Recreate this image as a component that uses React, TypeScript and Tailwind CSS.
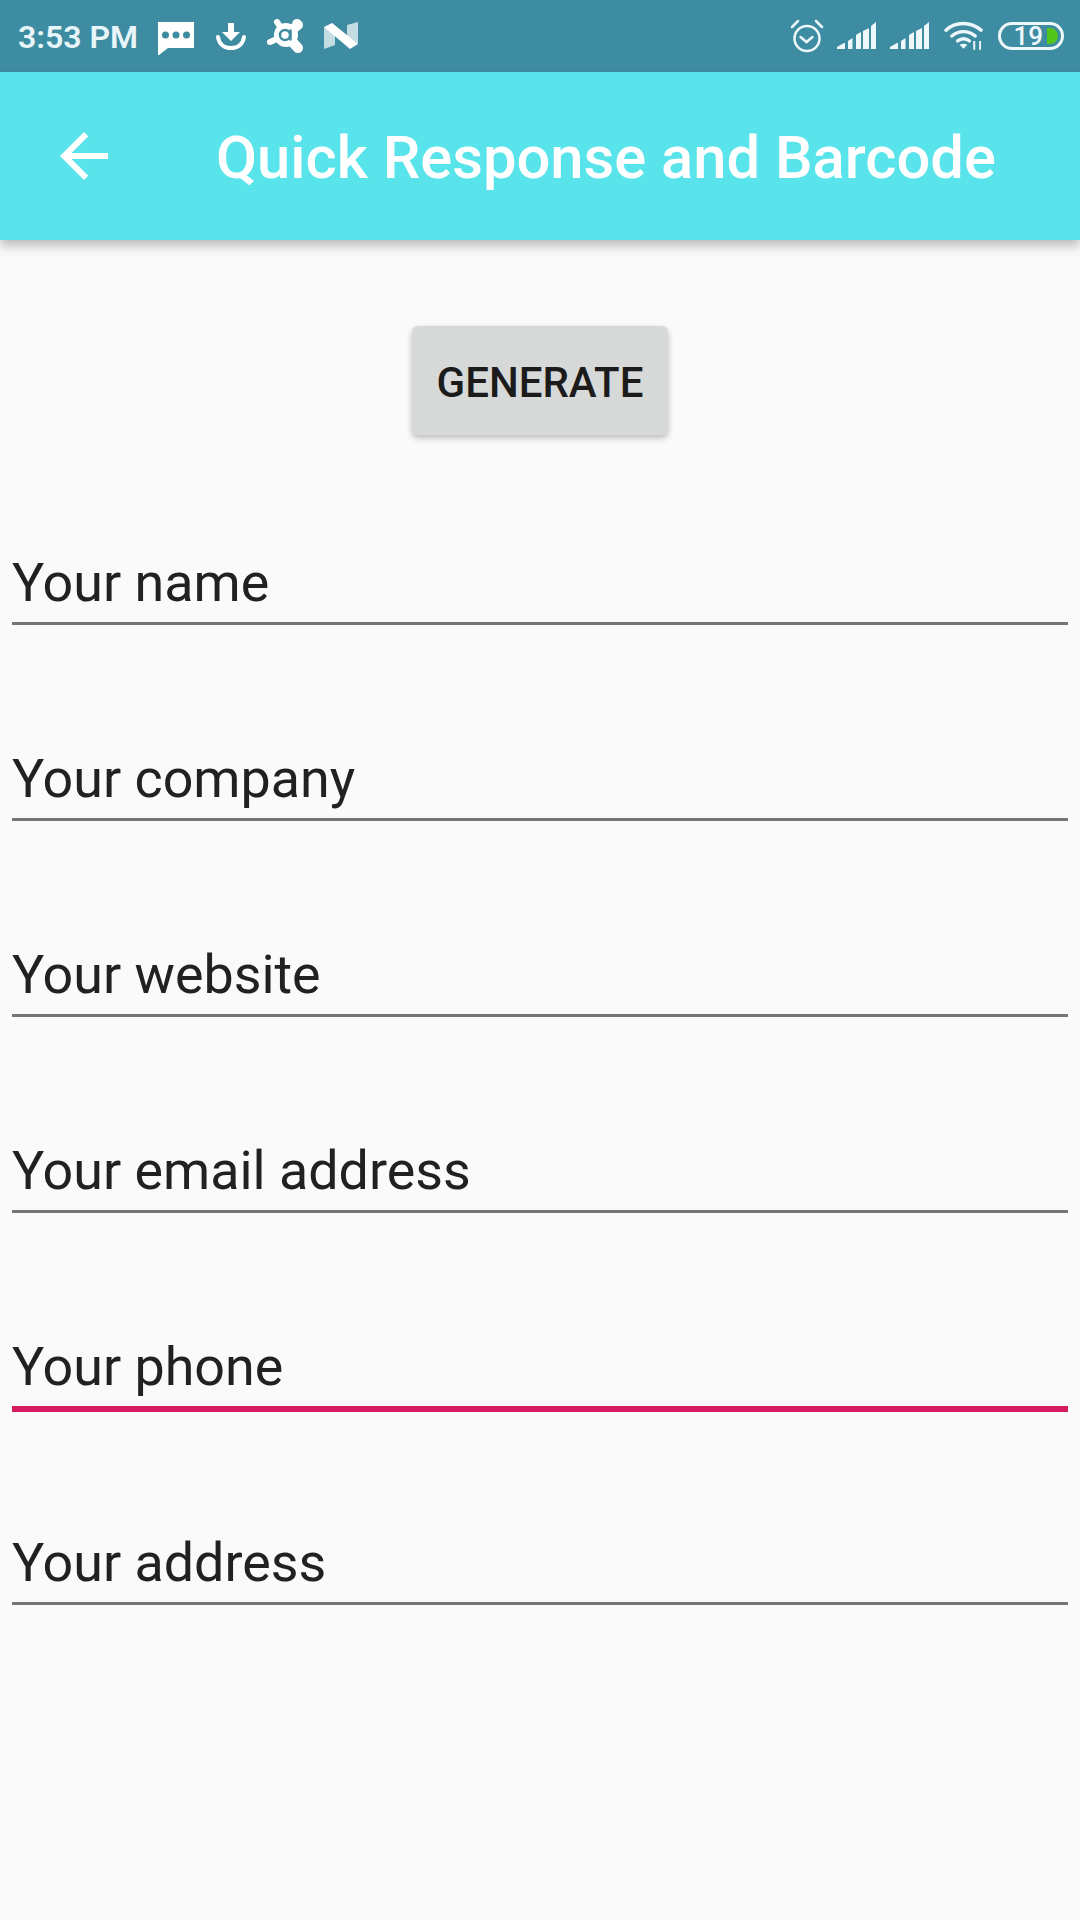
const fields = ['Your name', 'Your company', 'Your website', 'Your email address', 'Your phone', 'Your address'];

const Signal = () => (
  <svg width="40" height="28" viewBox="0 0 40 28" fill="#eef8fa">
    <path d="M0 27v-2l7-4h1v6z" />
    <path d="M11 27v-8l4.500-3v11z" />
    <path d="M19 27v-14l5-3v17z" />
    <path d="M26 27v-18l6-3v21z" />
    <path d="M34 27v-23l5-4v27z" />
  </svg>
);

const StatusBar = () => (
  <div className="flex h-[72px] items-center justify-between bg-[#3e8ca1] pl-[18px] pr-[16px]">
    <div className="flex items-center">
      <span className="pt-[2px] text-[32px] font-semibold leading-none text-[#e9f6f9]">3:53 PM</span>
      {/* message */}
      <svg className="ml-[20px] mt-[5px]" width="36" height="33" viewBox="0 0 36 33" fill="#fff">
        <path d="M0 0h36v26H10l-9 7H0z" />
        <circle cx="7.500" cy="13" r="3.500" fill="#3e8ca1" />
        <circle cx="18" cy="13" r="3.500" fill="#3e8ca1" />
        <circle cx="28.500" cy="13" r="3.500" fill="#3e8ca1" />
      </svg>
      {/* download */}
      <svg className="ml-[22px] mt-[1px]" width="30" height="27" viewBox="0 0 30 27" fill="none">
        <path d="M12 0h6v9h6l-9 9-9-9h6z" fill="#fff" />
        <path d="M2 14c1 7 6 11 13 11s12-4 13-11" stroke="#fff" strokeWidth="4" strokeLinecap="round" />
      </svg>
      {/* avast */}
      <svg className="ml-[21px]" width="37" height="35" viewBox="0 0 37 35" fill="none">
        <circle cx="19" cy="16" r="12" fill="#fff" />
        <path d="M19 16L31 6M31 6L30 5" stroke="#fff" strokeWidth="10" strokeLinecap="round" />
        <path d="M19 16L10 3" stroke="#fff" strokeWidth="6" strokeLinecap="round" />
        <path d="M19 16L3 23" stroke="#fff" strokeWidth="6" strokeLinecap="round" />
        <path d="M19 16L31 29" stroke="#fff" strokeWidth="10" strokeLinecap="round" />
        <circle cx="18" cy="16" r="5" stroke="#3e8ca1" strokeWidth="2.500" />
        <path d="M23.500 10.500V21.500" stroke="#3e8ca1" strokeWidth="2.500" />
      </svg>
      {/* N */}
      <svg className="ml-[20px]" width="34" height="28" viewBox="0 0 34 28">
        <path d="M0 5l11 7v11l-11 4z" fill="#c3dde3" />
        <path d="M23 3l11-3v22l-11-4z" fill="#c3dde3" />
        <path d="M0 5l8-4 26 21-8 5z" fill="#fff" />
      </svg>
    </div>
    <div className="flex items-center">
      {/* alarm */}
      <svg width="34" height="34" viewBox="0 0 34 34" fill="none" stroke="#eef8fa" strokeWidth="2.500">
        <circle cx="17" cy="19.500" r="12.500" />
        <path d="M10.500 18l6 5 6-5M2 8l6-6M32 8l-6-6" strokeLinecap="round" />
      </svg>
      <div className="ml-[13px] flex"><Signal /></div>
      <div className="ml-[13px] flex"><Signal /></div>
      {/* wifi */}
      <svg className="ml-[14px]" width="40" height="30" viewBox="0 0 41 30" fill="none" stroke="#eef8fa">
        <path d="M2 9c10-9 25-9 36 0" strokeWidth="3.500" strokeLinecap="round" />
        <path d="M8 15c7-6 17-6 24 0" strokeWidth="3.500" strokeLinecap="round" />
        <path d="M14 20c4-3 8-3 12 0" strokeWidth="3.500" strokeLinecap="round" />
        <path d="M20 28l-4-4q4-2 8 0z" fill="#eef8fa" strokeWidth="0" />
        <path d="M31 20v9M37 20v9" strokeWidth="2" />
      </svg>
      {/* battery */}
      <div className="ml-[14px] flex h-[28px] w-[66px] items-center justify-end rounded-full border-[3px] border-[#eef8fa] pr-[3px]">
        <span className="text-[26px] font-medium leading-[20px] text-[#eef8fa]">19</span>
        <div className="ml-[4px] h-[16px] w-[11px] rounded-r-full bg-[#52c41a]" />
      </div>
    </div>
  </div>
);

export default function App() {
  return (
    <div className="flex min-h-[1920px] flex-col bg-[#fafafa] [font-family:Roboto,sans-serif]">
      <StatusBar />
      <header className="z-10 flex h-[168px] items-center bg-[#58e4ea] shadow-[0_6px_10px_rgba(0,0,0,0.25)]">
        <svg className="ml-[48px]" width="72" height="72" viewBox="0 0 24 24" fill="#fff">
          <path d="M20 11H7.830l5.590-5.590L12 4l-8 8 8 8 1.410-1.410L7.830 13H20v-2z" />
        </svg>
        <h1 className="ml-[96px] pt-[5px] text-[59.700px] font-medium leading-none text-white">Quick Response and Barcode</h1>
      </header>
      <div className="flex justify-center pt-[86px]">
        <button className="h-[109px] w-[256px] rounded-[6px] bg-[#d7d8d8] pt-[4px] text-[42px] font-medium text-[#1b1b1b] shadow-[0_3px_6px_rgba(0,0,0,0.25)]">
          GENERATE
        </button>
      </div>
      <div className="mt-[34px] flex flex-col gap-[40px] px-[12px]">
        {fields.map(f => {
          const active = f === 'Your phone';
          return (
            <div key={f} className={`flex items-end ${active ? '-mb-[3px] h-[159px] border-b-[6px] border-[#d81b60]' : 'h-[156px] border-b-[3px] border-[#757575]'}`}>
              <span className="pb-[7px] text-[53.800px] leading-[64px] text-[#212121]">{f}</span>
            </div>
          );
        })}
      </div>
    </div>
  );
}
